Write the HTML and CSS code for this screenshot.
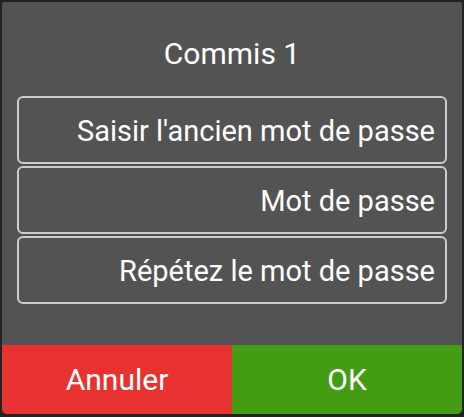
FILE: index.html
```html
<!DOCTYPE html>
<html lang="fr">
<head>
<meta charset="utf-8">
<link rel="stylesheet" href="styles.css">
</head>
<body>
<div class="dialog">
  <div class="title">Commis 1</div>
  <div class="fields">
    <div class="field">Saisir l'ancien mot de passe</div>
    <div class="field">Mot de passe</div>
    <div class="field">Répétez le mot de passe</div>
  </div>
  <div class="actions">
    <div class="btn cancel">Annuler</div>
    <div class="btn ok">OK</div>
  </div>
</div>
</body>
</html>
```
FILE: styles.css
```css
html, body {
  margin: 0;
  padding: 0;
  background: #222222;
  width: 464px;
  height: 417px;
  overflow: hidden;
}
body {
  padding: 2px 2px 3px 2px;
  box-sizing: border-box;
  font-family: Roboto, "Noto Sans", sans-serif;
  color: #ffffff;
}
.dialog {
  background: #545353;
  height: 412px;
  border-radius: 2px 2px 5px 5px;
  overflow: hidden;
  display: flex;
  flex-direction: column;
}
.title {
  height: 94px;
  display: flex;
  align-items: center;
  justify-content: center;
  font-size: 30px;
  padding-top: 9px;
  box-sizing: border-box;
}
.fields {
  display: flex;
  flex-direction: column;
  gap: 2px;
  padding: 0 15px;
  flex: 1;
}
.field {
  height: 68px;
  box-sizing: border-box;
  border: 2px solid #cccccc;
  border-radius: 6px;
  display: flex;
  align-items: center;
  justify-content: flex-end;
  padding-right: 10px;
  padding-top: 2px;
  font-size: 29px;
}
.actions {
  display: flex;
  height: 69px;
}
.btn {
  display: flex;
  align-items: center;
  justify-content: center;
  font-size: 30px;
}
.cancel {
  width: 230px;
  background: #e8322f;
}
.ok {
  flex: 1;
  background: #439c13;
}
```
